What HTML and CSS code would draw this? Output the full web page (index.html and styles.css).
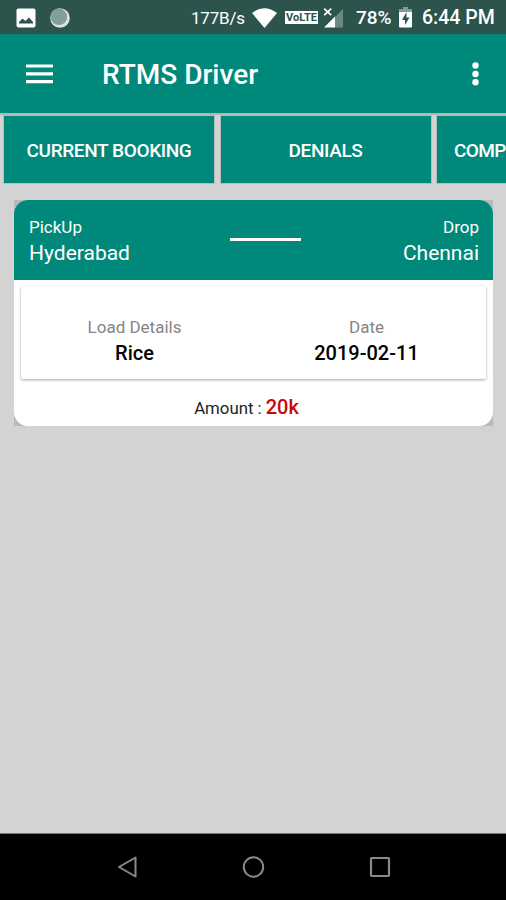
FILE: index.html
```html
<!DOCTYPE html>
<html lang="en">
<head>
<meta charset="utf-8">
<title>RTMS Driver</title>
<link rel="stylesheet" href="styles.css">
</head>
<body>
<div class="statusbar">
  <svg class="picture" width="20" height="20" viewBox="0 0 20 20"><rect x=".5" y=".5" width="19" height="19" rx="2" fill="#fff"/><path d="M3 15.500V14l3.500-3.500 3 2.500L13 9.500l4 4.500v1.500z" fill="#2c544c"/></svg>
  <svg class="moon" width="20" height="20" viewBox="0 0 20 20"><circle cx="10" cy="10" r="9.800" fill="#dce2dc"/><circle cx="8.800" cy="8.800" r="8.300" fill="#829f98"/></svg>
  <span class="speed">177B/s</span>
  <svg class="wifi" width="25" height="20" viewBox="0 0 25 20"><path d="M0 5Q12.500-4.500 25 5L12.500 20z" fill="#fff"/></svg>
  <span class="volte">VoLTE</span>
  <svg class="signal" width="21" height="20" viewBox="0 0 21 20"><path d="M11 10 20 1v18.500h-9z" fill="#6e8983"/><path d="M1 19.500 12 8.500v11z" fill="#fff"/><path d="m1.200.700 7 6.500m0-6.500-7 6.500" stroke="#fff" stroke-width="1.700"/></svg>
  <span class="percent">78%</span>
  <svg class="battery" width="13" height="21" viewBox="0 0 13 21"><path d="M4 0h5v2h4v4H0V2h4z" fill="#829c96"/><path d="M0 5h13v14.500q0 1-1 1H1q-1 0-1-1z" fill="#fff"/><path d="M7.500 5 3 13h3v5l4.500-7.500h-3z" fill="#2c544c"/></svg>
  <span class="clock">6:44 PM</span>
</div>
<header class="appbar">
  <svg class="menu" width="27" height="20" viewBox="0 0 27 20"><path d="M0 2h27M0 9.800h27M0 17.600h27" stroke="#fff" stroke-width="3.200"/></svg>
  <h1 class="title">RTMS Driver</h1>
  <svg class="more" width="7" height="24" viewBox="0 0 7 24"><g fill="#fff"><circle cx="3.500" cy="3.500" r="3.200"/><circle cx="3.500" cy="12" r="3.200"/><circle cx="3.500" cy="20.300" r="3.200"/></g></svg>
</header>
<nav class="tabs">
  <div class="tab">CURRENT BOOKING</div>
  <div class="tab">DENIALS</div>
  <div class="tab tab-last">COMP</div>
</nav>
<main class="content">
  <div class="card-frame"><article class="card">
    <div class="route">
      <div class="place"><span class="label">PickUp</span><span class="city">Hyderabad</span></div>
      <div class="dash"></div>
      <div class="place drop"><span class="label">Drop</span><span class="city">Chennai</span></div>
    </div>
    <div class="details">
      <div class="detail"><span class="name">Load Details</span><span class="value">Rice</span></div>
      <div class="detail"><span class="name">Date</span><span class="value">2019-02-11</span></div>
    </div>
    <div class="amount"><span class="amount-label">Amount :</span><strong>20k</strong></div>
  </article></div>
</main>
<footer class="navbar">
  <svg width="22" height="24" viewBox="0 0 22 24"><path d="M3 12 19.500 2.500v19z" fill="none" stroke="#8a8a8a" stroke-width="2" stroke-linejoin="round"/></svg>
  <svg width="24" height="24" viewBox="0 0 24 24"><circle cx="11.500" cy="12" r="9.700" fill="none" stroke="#8a8a8a" stroke-width="2"/></svg>
  <svg width="22" height="24" viewBox="0 0 22 24"><rect x="2" y="3" width="18" height="18" rx="1" fill="none" stroke="#8a8a8a" stroke-width="2.200"/></svg>
</footer>
</body>
</html>
```
FILE: styles.css
```css
* { box-sizing: border-box; }
body { margin: 0; width: 506px; height: 900px; overflow: hidden; display: flex; flex-direction: column; background: #d3d3d3; font-family: Roboto, sans-serif; color: #fff; }
svg { display: block; flex: none; }
span, h1, strong { white-space: nowrap; }
.statusbar { height: 34px; flex: none; display: flex; align-items: center; background: #2c544c; padding: 1px 0 0 16px; line-height: 34px; }
.moon { margin-left: 14px; }
.speed { width: 54px; margin-left: 121px; font-size: 17px; letter-spacing: -.2px; }
.wifi { margin-left: 7px; }
.volte { width: 33px; height: 13px; margin-left: 8px; background: #fff; color: #2c544c; font-size: 11px; line-height: 13px; font-weight: 700; text-align: center; }
.signal { margin-left: 5px; }
.percent { width: 37px; margin-left: 12px; font-size: 19px; font-weight: 500; }
.battery { margin-left: 6px; }
.clock { margin-left: 10px; font-size: 19.500px; font-weight: 500; }
.appbar { height: 79px; flex: none; display: flex; align-items: center; background: #00897a; padding: 0 27px 0 26px; }
.title { margin: 2px 0 0 49px; font-size: 28px; font-weight: 500; line-height: 40px; }
.more { margin-left: auto; }
.tabs { height: 70px; flex: none; display: flex; gap: 6.500px; padding: 3px 0 0 4px; background: linear-gradient(#b5b5b5 2px, #d3d3d3 2px); }
.tab { width: 210px; height: 67px; flex: none; display: flex; align-items: center; justify-content: center; background: #00897a; box-shadow: 0 0 0 1px #b5bdbb; padding-top: 2px; font-size: 19px; font-weight: 500; letter-spacing: -.38px; }
.tab-last { width: auto; flex: 1; justify-content: flex-start; padding-left: 17px; letter-spacing: -.6px; }
.content { flex: 1; padding: 17px 13px 0 14px; }
.card-frame { background: #b9b9b9; }
.card { height: 226px; background: #fff; border-radius: 14px; overflow: hidden; display: flex; flex-direction: column; }
.route { height: 80px; flex: none; display: flex; background: #00897a; padding: 14px 14px 0 15px; }
.place { width: 110px; display: flex; flex-direction: column; }
.drop { margin-left: auto; align-items: flex-end; }
.label { font-size: 17px; line-height: 26px; }
.city { font-size: 21px; line-height: 26px; }
.dash { width: 71px; height: 3px; margin: 24px 0 0 91px; background: #fff; }
.details { height: 93px; flex: none; margin: 6px 7px 0; padding-top: 29px; display: grid; grid-template-columns: 227px 237px; background: #fff; border-radius: 2px; box-shadow: 0 1px 3px rgba(0,0,0,.36); }
.detail { display: flex; flex-direction: column; align-items: center; color: #000; }
.name { color: #858585; font-size: 17px; line-height: 25px; }
.value { font-size: 20px; font-weight: 500; line-height: 26px; }
.amount { display: flex; justify-content: center; align-items: baseline; gap: 4px; margin-top: 15px; padding-right: 14px; color: #222; font-size: 16.800px; line-height: 26px; }
.amount strong { color: #ca0606; font-size: 20px; font-weight: 500; }
.navbar { height: 67px; flex: none; display: flex; align-items: center; justify-content: space-between; background: #000; border-top: 1px solid #777; padding: 0 115px 0 116px; }
```
